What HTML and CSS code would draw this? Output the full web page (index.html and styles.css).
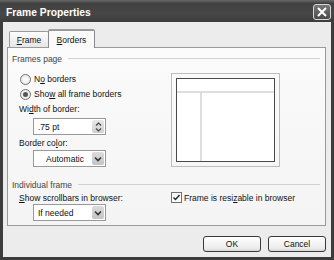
FILE: index.html
```html
<!DOCTYPE html>
<html lang="en">
<head>
    <meta charset="UTF-8">
    <title>Frame Properties</title>
    <link rel="stylesheet" href="styles.css">
</head>
<body>

<div class="window">
    <div class="titlebar">
        <span class="title">Frame Properties</span>
        <span class="close">
            <svg width="10" height="10" viewBox="0 0 10 10"><path d="M1 1 L9 9 M9 1 L1 9" stroke="#fff" stroke-width="2"/></svg>
        </span>
    </div>
    <div class="client">
        <div class="tabs">
            <div class="tab"><span><u>F</u>rame</span></div>
            <div class="tab active"><span><u>B</u>orders</span></div>
        </div>
        <div class="panel">
            <div class="group-head"><span>Frames page</span><i></i></div>
            <div class="row frames-row">
                <div class="col">
                    <div class="radio"><span class="dot"></span><span>N<u>o</u> borders</span></div>
                    <div class="radio second"><span class="dot on"></span><span>Sho<u>w</u> all frame borders</span></div>
                    <div class="lbl">Wi<u>d</u>th of border:</div>
                    <div class="field">
                        <span class="value">.75 pt</span>
                        <span class="spin">
                            <svg width="7" height="12" viewBox="0 0 7 12"><path d="M1 4.5 L3.5 2 L6 4.5 M1 7.5 L3.5 10 L6 7.5" fill="none" stroke="#444" stroke-width="1.2"/></svg>
                        </span>
                    </div>
                    <div class="lbl">Border co<u>l</u>or:</div>
                    <div class="field select">
                        <span class="value centered">Automatic</span>
                        <span class="drop">
                            <svg width="8" height="6" viewBox="0 0 8 6"><path d="M1 1.5 L4 4.5 L7 1.5" fill="none" stroke="#333" stroke-width="1.6"/></svg>
                        </span>
                    </div>
                </div>
                <div class="preview">
                    <div class="preview-inner">
                        <div class="hline"></div>
                        <div class="vline"></div>
                    </div>
                </div>
            </div>
            <div class="group-head second-group"><span>Individual frame</span><i></i></div>
            <div class="row">
                <div class="col">
                    <div class="lbl"><u>S</u>how scrollbars in browser:</div>
                    <div class="field select tight">
                        <span class="value">If needed</span>
                        <span class="drop">
                            <svg width="8" height="6" viewBox="0 0 8 6"><path d="M1 1.5 L4 4.5 L7 1.5" fill="none" stroke="#333" stroke-width="1.6"/></svg>
                        </span>
                    </div>
                </div>
                <div class="check">
                    <span class="box">
                        <svg width="9" height="9" viewBox="0 0 9 9"><path d="M1.5 4.5 L3.5 6.5 L7.5 2" fill="none" stroke="#222" stroke-width="1.4"/></svg>
                    </span>
                    <span>Frame is resi<u>z</u>able in browser</span>
                </div>
            </div>
        </div>
        <div class="buttons">
            <div class="btn">OK</div>
            <div class="btn">Cancel</div>
        </div>
    </div>
</div>

</body>
</html>
```

FILE: styles.css
```css
body {
    margin: 0;
    background-color: #3c3c3c;
    font-family: "Liberation Sans", Arial, sans-serif;
    font-size: 8.5px;
    color: #111;
}
.window {
    width: 334px;
    height: 260px;
    background-color: #3c3c3c;
    display: flex;
    flex-direction: column;
}
.titlebar {
    height: 22px;
    display: flex;
    align-items: center;
    justify-content: space-between;
    padding: 2px 3px 0 6px;
    box-sizing: border-box;
    background: linear-gradient(#6a6a6a, #404040 15%, #474747 60%, #3d3d3d);
}
.title {
    color: #fff;
    font-weight: bold;
    font-size: 10.3px;
}
.close {
    width: 18px;
    height: 16px;
    box-sizing: border-box;
    border: 1px solid #d8d8d8;
    border-radius: 3px;
    background: linear-gradient(#777, #4a4a4a);
    display: flex;
    align-items: center;
    justify-content: center;
}
.client {
    margin: 0 3px 3px 3px;
    flex: 1;
    background-color: #ececec;
    padding: 7px 5px 0 4px;
}
.tabs {
    display: flex;
    align-items: flex-end;
    padding-left: 2px;
    height: 18px;
}
.tab {
    width: 40px;
    height: 16px;
    box-sizing: border-box;
    border: 1px solid #9a9a9a;
    border-bottom: none;
    border-radius: 2px 2px 0 0;
    background: linear-gradient(#fdfdfd, #e6e6e6);
    display: flex;
    align-items: center;
    justify-content: center;
    padding-top: 1px;
}
.tab.active {
    width: 47px;
    height: 19px;
    margin-bottom: -1px;
    background: #fafafa;
    border-color: #8a8a8a;
    border-top: 2px solid #9a9a9a;
    position: relative;
    z-index: 1;
    margin-left: -1px;
}
.panel {
    border: 1px solid #9a9a9a;
    background: linear-gradient(#fbfbfb, #f4f4f4);
    padding: 0 5px 4px 4px;
}
.group-head {
    display: flex;
    align-items: center;
    height: 11px;
    margin-top: 5px;
    color: #444;
}
.group-head i {
    flex: 1;
    height: 1px;
    background-color: #d2d2d2;
    margin-left: 6px;
}
.second-group {
    margin-top: 12px;
}
.row {
    display: flex;
}
.frames-row {
    margin-top: 8px;
}
.col {
    width: 159px;
    display: flex;
    flex-direction: column;
}
.radio {
    height: 14px;
    display: flex;
    align-items: center;
    margin-left: 8px;
}
.radio.second {
    margin-top: 1px;
}
.dot {
    width: 11px;
    height: 11px;
    box-sizing: border-box;
    border: 1px solid #707070;
    border-radius: 50%;
    background: radial-gradient(#fff, #e4e4e4);
    margin-right: 3px;
    display: flex;
    align-items: center;
    justify-content: center;
}
.dot.on::after {
    content: "";
    width: 5px;
    height: 5px;
    border-radius: 50%;
    background-color: #555;
}
.lbl {
    height: 11px;
    line-height: 11px;
    margin: 3px 0 0 7px;
}
.field {
    width: 73px;
    height: 17px;
    box-sizing: border-box;
    margin: 3px 0 0 21px;
    border: 1px solid #999;
    background-color: #fff;
    display: flex;
    align-items: center;
    padding: 1px;
}
.field.select {
    margin-top: 1px;
}
.field.tight {
    margin-top: 0;
}
.value {
    flex: 1;
    padding-left: 3px;
}
.value.centered {
    text-align: center;
}
.spin, .drop {
    width: 12px;
    height: 13px;
    border-radius: 2px;
    background: linear-gradient(#e8e8e8, #cfcfcf);
    display: flex;
    align-items: center;
    justify-content: center;
}
.drop {
    background: linear-gradient(#dcdcdc, #c4c4c4);
}
.preview {
    width: 109px;
    height: 94px;
    box-sizing: border-box;
    margin-top: 1px;
    border: 1px solid #bdbdbd;
    padding: 4px;
}
.preview-inner {
    height: 100%;
    box-sizing: border-box;
    border: 1px solid #4a4a4a;
    background-color: #fff;
    display: flex;
    flex-direction: column;
}
.hline {
    height: 2px;
    margin-top: 12px;
    background-color: #dedede;
}
.vline {
    flex: 1;
    width: 2px;
    margin-left: 23px;
    background-color: #dedede;
}
.check {
    display: flex;
    align-items: center;
    height: 11px;
    margin-top: 2px;
}
.box {
    width: 11px;
    height: 11px;
    box-sizing: border-box;
    border: 1px solid #707070;
    background: linear-gradient(#f4f4f4, #fff);
    margin-right: 2px;
    display: flex;
    align-items: center;
    justify-content: center;
}
.buttons {
    display: flex;
    justify-content: flex-end;
    gap: 7px;
    margin-top: 10px;
}
.btn {
    width: 58px;
    height: 16px;
    box-sizing: border-box;
    border: 1px solid #3a3a3a;
    border-radius: 3px;
    background: linear-gradient(#ffffff, #ececec 80%, #d6d6d6);
    display: flex;
    align-items: center;
    justify-content: center;
}
```
